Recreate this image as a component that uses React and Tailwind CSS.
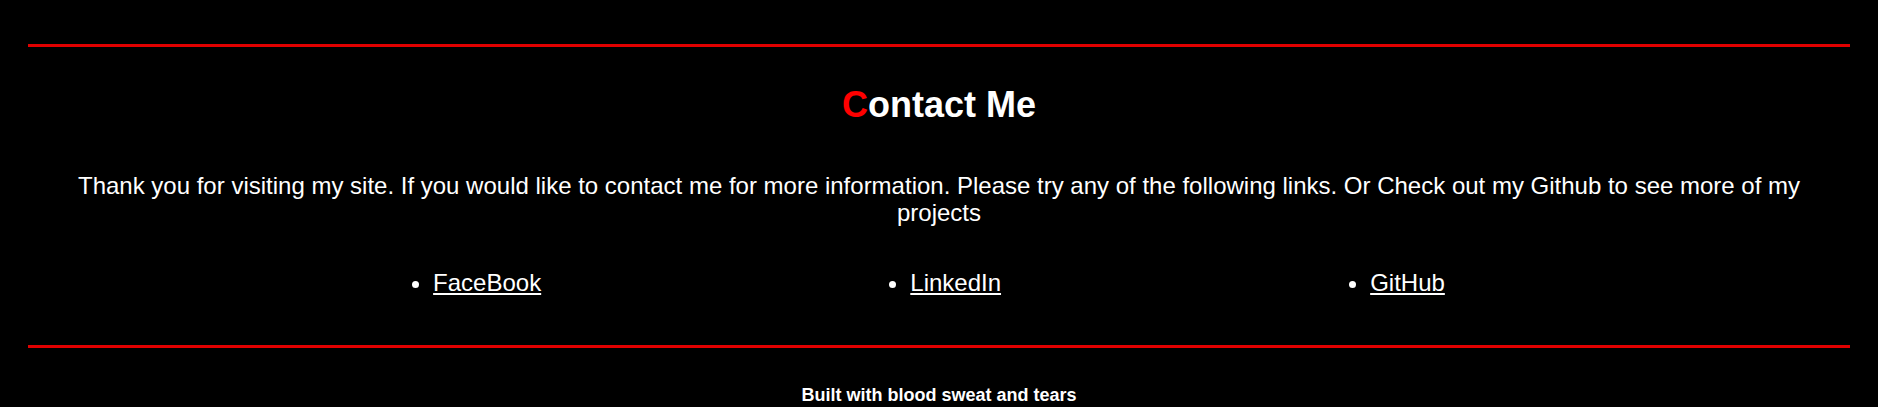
export default function App() {
  return (
    <div className="min-h-screen bg-black text-white font-['Liberation_Sans',Arial,sans-serif] overflow-hidden">
      <div className="pt-[44px]">
        <div className="mx-auto h-[3px] w-[97%] bg-[#e00000]" />
      </div>
      <section className="flex flex-col items-center px-[64px]">
        <h1 className="mt-[37px] text-[36px] font-bold leading-[41px]">
          <span className="text-[#ff0000]">C</span>ontact Me
        </h1>
        <p className="mt-[47px] text-center text-[24px] leading-[27px]">
          Thank you for visiting my site. If you would like to contact me for more information. Please try any of the following links. Or Check out my Github to see more of my projects
        </p>
        <ul className="mt-[43px] flex w-full list-disc justify-evenly text-[24px] leading-[27px]">
          <li>
            <a href="#" className="underline">FaceBook</a>
          </li>
          <li>
            <a href="#" className="underline">LinkedIn</a>
          </li>
          <li>
            <a href="#" className="underline">GitHub</a>
          </li>
        </ul>
      </section>
      <div className="mt-[49px]">
        <div className="mx-auto h-[3px] w-[97%] bg-[#e00000]" />
      </div>
      <footer className="mt-[37px] text-center text-[18px] font-bold leading-[21px]">
        Built with blood sweat and tears
      </footer>
    </div>
  );
}
